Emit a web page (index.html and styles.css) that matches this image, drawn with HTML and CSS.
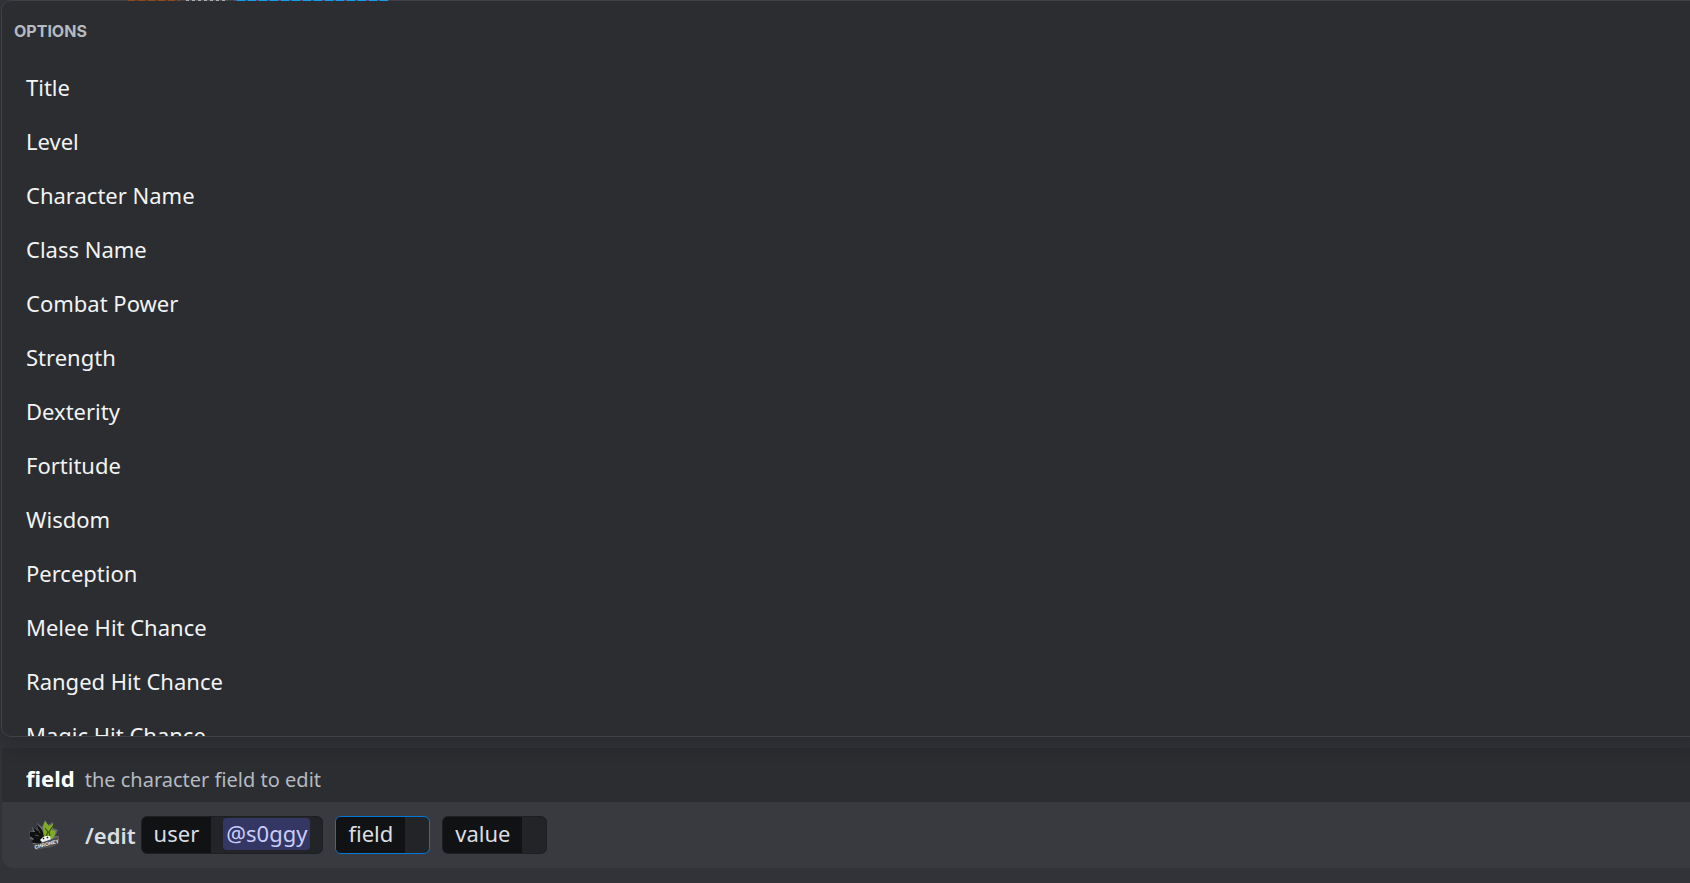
FILE: index.html
```
<!DOCTYPE html>
<html lang="en">
<head>
  <meta charset="UTF-8">
  <meta name="viewport" content="width=device-width, initial-scale=1.0">
  <title>Edit Command</title>
  <link rel="stylesheet" href="styles.css">
</head>
<body>

  <main class="chat">
    <!-- Last message, mostly covered by the options panel -->
    <div class="message">
      <span class="message-name"></span>
      <span class="message-used"></span>
      <span class="message-command"></span>
    </div>

    <section class="options">
      <h2 class="options-title">Options</h2>
      <div class="options-list">
        <button class="option" type="button">Title</button>
        <button class="option" type="button">Level</button>
        <button class="option" type="button">Character Name</button>
        <button class="option" type="button">Class Name</button>
        <button class="option" type="button">Combat Power</button>
        <button class="option" type="button">Strength</button>
        <button class="option" type="button">Dexterity</button>
        <button class="option" type="button">Fortitude</button>
        <button class="option" type="button">Wisdom</button>
        <button class="option" type="button">Perception</button>
        <button class="option" type="button">Melee Hit Chance</button>
        <button class="option" type="button">Ranged Hit Chance</button>
        <button class="option" type="button">Magic Hit Chance</button>
      </div>
    </section>

    <form class="composer">
      <div class="hint">
        <strong class="hint-name">field</strong>
        <span class="hint-text">the character field to edit</span>
      </div>

      <div class="command">
        <svg class="avatar" viewBox="0 0 32 32" aria-hidden="true">
          <path d="M1 13l4-1-1-4 5 2 0-6 5 4 3-7 3 5 5-3 0 6 5 2-3 6 4 0-1 8-7 3-7 1-8 2 2-5-6-1 3-3-6-3 4-2z" fill="#66686b"/>
          <path d="M2 13l5 0-2-5 5 4-1-7 5 6 2 5 0 5-4 4-5-1-4-1 3-3-4-3z" fill="#0e1011"/>
          <path d="M15 8l2-6 4 5 4-2-1 6 4 1-2 6-3 3-7-1z" fill="#7fab27"/>
          <path d="M17 9l3 4-2 4M25 7l-4 6 1 4" fill="none" stroke="#3a5110" stroke-width="1.2"/>
          <path d="M10 10l2 4M7 16l4 1" fill="none" stroke="#4c4f52"/>
          <path d="M12 21l3-3 3-1 4 0 1 4-8 3z" fill="#f1f1f2"/>
          <path d="M15 20l1-1M19 19l1-1" stroke="#17191a" stroke-width="1.5"/>
          <path d="M6 26l9-3 15-5-1 8-9 2-13 3z" fill="#4a4c4f"/>
          <text class="avatar-text" x="7" y="30" transform="rotate(-15 7 30)">CHRONEY</text>
        </svg>
        <span class="command-name">/edit</span>
        <div class="param">
          <span class="param-label">user</span>
          <span class="param-value"><a class="mention" href="#">@s0ggy</a></span>
        </div>
        <label class="param param-active">
          <span class="param-label">field</span>
          <input class="param-input" type="text" name="field">
        </label>
        <label class="param">
          <span class="param-label">value</span>
          <input class="param-input" type="text" name="value">
        </label>
      </div>
    </form>
  </main>

</body>
</html>
```
FILE: styles.css
```
* {
  box-sizing: border-box;
}
body {
  margin: 0;
  background-color: #313338;
  color: #f2f3f5;
  font-family: "Noto Sans", sans-serif;
  font-size: 22px;
  overflow: hidden;
}
button, input {
  font: inherit;
  color: inherit;
}
.chat {
  display: flex;
  flex-direction: column;
  height: 100vh;
  padding: 0 0 15px 2px;
}
.message {
  position: relative;
  z-index: 1;
  display: flex;
  gap: 6px;
  height: 1px;
  padding-left: 126px;
  margin-bottom: -1px;
}
.message-name {
  width: 52px;
  background: repeating-linear-gradient(90deg, #8a4a22 0 7px, #4a3c36 7px 10px);
}
.message-used {
  width: 42px;
  background: repeating-linear-gradient(90deg, #a9abaf 0 3px, #4b4d52 3px 6px);
}
.message-command {
  width: 154px;
  background: repeating-linear-gradient(90deg, #4e4f83 0 3px, #12a0ee 3px 11px);
}
.options {
  flex: 1;
  min-height: 0;
  margin: 0 -12px 11px -1px;
  border: 1px solid #3f4147;
  border-radius: 10px;
  background-color: #2b2d31;
  box-shadow: 0 8px 20px rgba(0, 0, 0, 0.2);
  overflow: hidden;
  position: relative;
}
.options-title {
  margin: 0;
  padding: 18px 12px 17px;
  color: #b5bac1;
  font-family: Inter, sans-serif;
  font-size: 16px;
  font-weight: 700;
  line-height: 24px;
  text-transform: uppercase;
}
.option {
  display: block;
  width: 100%;
  height: 54px;
  padding: 0 24px;
  border: none;
  background: none;
  text-align: left;
  cursor: pointer;
}
.option:hover {
  background-color: #35373c;
}
.hint {
  display: flex;
  align-items: baseline;
  gap: 10px;
  height: 54px;
  padding: 15px 24px 0;
  background-color: #2b2d31;
  line-height: 30px;
}
.hint-name {
  color: #fff;
  font-weight: 700;
}
.hint-text {
  color: #b5bac1;
  font-size: 20px;
}
.command {
  display: flex;
  align-items: center;
  height: 66px;
  padding: 0 26px;
  border-radius: 0 0 0 12px;
  background-color: #383a40;
  color: #dbdee1;
}
.avatar {
  width: 32px;
  height: 32px;
  margin-right: 25px;
}
.avatar-text {
  fill: #f1f1f2;
  font-family: "Liberation Sans", sans-serif;
  font-size: 5px;
  font-weight: 700;
}
.command-name {
  margin-right: 5px;
  font-weight: 600;
  line-height: 32px;
}
.param {
  display: flex;
  height: 38px;
  margin-right: 12px;
  border: 1px solid #1e1f22;
  border-radius: 6px;
  background-color: #232428;
  line-height: 32px;
  overflow: hidden;
}
.param-active {
  border-color: #0078d7;
}
.param-label {
  padding: 0 12px;
  background-color: #111214;
}
.param-value {
  padding: 1px 12px;
}
.mention {
  display: block;
  height: 32px;
  padding: 0 3px;
  border-radius: 4px;
  background-color: #343764;
  color: #c9cdfb;
  line-height: 30px;
  text-decoration: none;
}
.param-input {
  width: 24px;
  padding: 0;
  border: none;
  outline: none;
  background: none;
}
```
